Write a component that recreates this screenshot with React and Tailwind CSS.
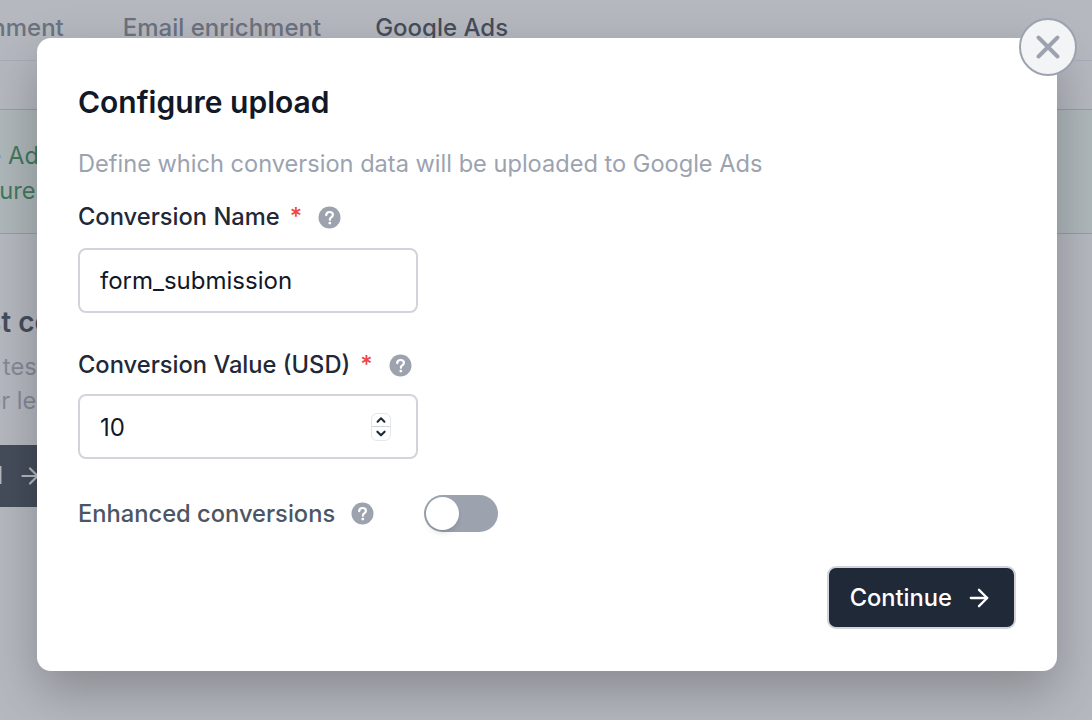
import React from 'react';
import { ArrowRight, X } from 'lucide-react';

function HelpIcon() {
  return (
    <svg width="23" height="23" viewBox="0 0 23 23" className="shrink-0">
      <circle cx="11.5" cy="11.5" r="11" fill="#9ca3af" />
      <path d="M8.2 9.1c.1-2 1.5-3.1 3.4-3.1 1.9 0 3.3 1.1 3.3 2.8 0 1.3-.7 2-1.7 2.6-.9.6-1.3 1-1.3 2v.4" fill="none" stroke="#fff" strokeWidth="2.2" strokeLinecap="round" />
      <circle cx="11.8" cy="17.1" r="1.4" fill="#fff" />
    </svg>
  );
}

function Label({ children }) {
  return (
    <div className="flex items-center h-[30px]">
      <span className="text-[23.7px] font-medium text-[#1f2937]">{children}</span>
      <span className="ml-[10px] text-[23.7px] font-medium text-[#ef4444]">*</span>
      <span className="ml-[16px]"><HelpIcon /></span>
    </div>
  );
}

export default function App() {
  return (
    <div className="relative w-[1092px] h-[720px] overflow-hidden bg-white font-['Inter',sans-serif]">
      {/* page behind the modal */}
      <div className="flex gap-[54px] h-[61px] pt-[10px] border-b border-[#e5e7eb] text-[24px] font-medium text-[#6b7280] whitespace-nowrap">
        <span className="ml-[-146px] mr-[5px]">Phone enrichment</span>
        <span>Email enrichment</span>
        <span className="text-[#1f2937]">Google Ads</span>
      </div>
      <div className="mt-[48px] h-[125px] border-y border-[#86efac] bg-[#f0fdf4] pt-[28px] text-[23.7px] leading-[35px] text-[#15803d] whitespace-nowrap">
        <p className="ml-[-180px]">Connect Google Ads</p>
        <p className="ml-[-100px]">to configure</p>
      </div>
      <h2 className="mt-[67px] ml-[-47px] text-[28px] font-semibold text-[#1f2937] whitespace-nowrap">Test conversion</h2>
      <p className="mt-[7px] ml-[-67px] text-[23.7px] leading-[34px] text-[#9ca3af] whitespace-nowrap">Run a test</p>
      <p className="ml-[-21px] text-[23.7px] leading-[34px] text-[#9ca3af] whitespace-nowrap">for leads</p>
      <button className="mt-[27px] ml-[-107px] flex items-center justify-end gap-[14px] h-[62px] w-[170px] px-[20px] rounded-[9px] bg-[#1f2937] text-white text-[23.7px] font-medium">
        Install
        <ArrowRight size={26} strokeWidth={2} />
      </button>

      {/* overlay */}
      <div className="absolute inset-0 bg-[#6b7280]/50" />

      {/* modal */}
      <div className="absolute left-[37px] top-[38px] w-[1020px] h-[633px] rounded-[14px] bg-white px-[41px] pt-[46px] shadow-[0_20px_50px_rgba(0,0,0,0.25)]">
        <h1 className="text-[30px] leading-[36px] font-semibold text-[#111827]">Configure upload</h1>
        <p className="mt-[30px] text-[23.6px] leading-[28px] text-[#9ca3af]">Define which conversion data will be uploaded to Google Ads</p>

        <div className="mt-[24px]">
          <Label>Conversion Name</Label>
          <input
            readOnly
            value="form_submission"
            className="mt-[16px] block w-[340px] h-[65px] rounded-[8px] border-2 border-[#d1d5db] bg-white px-[20px] text-[24px] text-[#111827] outline-none"
          />
        </div>

        <div className="mt-[37px]">
          <Label>Conversion Value (USD)</Label>
          <div className="mt-[14px] flex items-center w-[340px] h-[65px] rounded-[8px] border-2 border-[#d1d5db] bg-white pl-[20px] pr-[25px]">
            <input readOnly value="10" className="flex-1 min-w-0 pt-[2px] text-[24px] text-[#111827] outline-none" />
            <div className="flex flex-col w-[20px] h-[28px] rounded-[6px] border border-[#e5e7eb] divide-y divide-[#d1d5db]">
              <svg viewBox="0 0 20 14" className="w-full h-[14px]"><path d="M6 9l4-4 4 4" fill="none" stroke="#1f2937" strokeWidth="2.4" strokeLinecap="round" strokeLinejoin="round" /></svg>
              <svg viewBox="0 0 20 14" className="w-full h-[14px]"><path d="M6 5l4 4 4-4" fill="none" stroke="#1f2937" strokeWidth="2.4" strokeLinecap="round" strokeLinejoin="round" /></svg>
            </div>
          </div>
        </div>

        <div className="mt-[36px] flex items-center h-[37px]">
          <span className="text-[23.7px] font-medium text-[#4b5563]">Enhanced conversions</span>
          <span className="ml-[16px]"><HelpIcon /></span>
          <div className="ml-[50px] flex items-center w-[74px] h-[37px] rounded-full bg-[#9ca3af] px-[2px]">
            <div className="w-[33px] h-[33px] rounded-full bg-white shadow-md" />
          </div>
        </div>

        <div className="mt-[34px] flex justify-end">
          <button className="flex items-center gap-[13px] h-[63px] px-[21px] pt-[1px] rounded-[9px] border-2 border-[#d1d5db] bg-[#1f2937] text-white text-[23.7px] font-medium">
            Continue
            <ArrowRight size={28} strokeWidth={2} />
          </button>
        </div>
      </div>

      {/* close button */}
      <button className="absolute left-[1019px] top-[18px] flex items-center justify-center w-[58px] h-[58px] rounded-full border-2 border-[#9ca3af] bg-[#f3f4f6] text-[#9ca3af]">
        <X size={38} strokeWidth={2.5} />
      </button>
    </div>
  );
}
